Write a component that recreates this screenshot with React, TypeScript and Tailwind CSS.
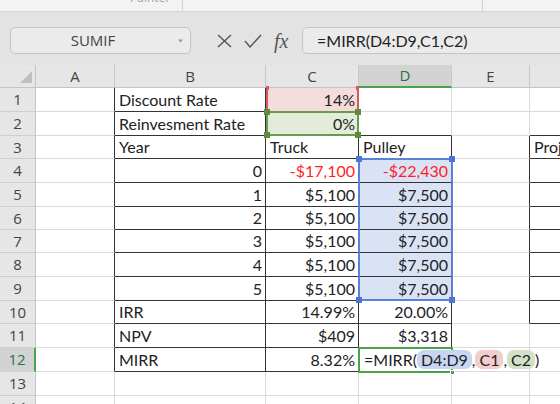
import React from 'react';

const COL_LETTERS = ['A', 'B', 'C', 'D', 'E', 'F'];
const ROW_COUNT = 14;

type Cell = { text: React.ReactNode; right?: boolean; red?: boolean };

const CELLS: Record<string, Cell> = {
  '1,1': { text: 'Discount Rate' },
  '1,2': { text: '14%', right: true },
  '2,1': { text: 'Reinvesment Rate' },
  '2,2': { text: '0%', right: true },
  '3,1': { text: 'Year' },
  '3,2': { text: 'Truck' },
  '3,3': { text: 'Pulley' },
  '3,5': { text: 'Project' },
  '4,1': { text: '0', right: true },
  '4,2': { text: '-$17,100', right: true, red: true },
  '4,3': { text: '-$22,430', right: true, red: true },
  '10,1': { text: 'IRR' },
  '10,2': { text: '14.99%', right: true },
  '10,3': { text: '20.00%', right: true },
  '11,1': { text: 'NPV' },
  '11,2': { text: '$409', right: true },
  '11,3': { text: '$3,318', right: true },
  '12,1': { text: 'MIRR' },
  '12,2': { text: '8.32%', right: true },
};
for (let i = 1; i <= 5; i++) {
  CELLS[`${i + 4},1`] = { text: String(i), right: true };
  CELLS[`${i + 4},2`] = { text: '$5,100', right: true };
  CELLS[`${i + 4},3`] = { text: '$7,500', right: true };
}

// cells that carry a thin black border
function boxed(r: number, c: number) {
  if (c === 1 && r >= 1 && r <= 12) return true;
  if ((c === 2 || c === 3) && r >= 3 && r <= 12) return true;
  if (c === 5 && r >= 3 && r <= 10) return true;
  return false;
}

function Pill({ bg, children }: { bg: string; children: React.ReactNode }) {
  return <span className={`rounded-[7px] px-[4px] ${bg}`}>{children}</span>;
}

function FormulaInCell() {
  return (
    <span className="relative z-10 whitespace-nowrap pl-[1px]">
      =MIRR(
      <Pill bg="bg-[#c9d6f2]">D4:D9</Pill>,<Pill bg="bg-[#f3cccc]">C1</Pill>,
      <Pill bg="bg-[#d3e1c8]">C2</Pill>)
    </span>
  );
}

function GridCell({ r, c }: { r: number; c: number }) {
  const cell = CELLS[`${r},${c}`];
  const darkRight = boxed(r, c) || boxed(r, c + 1);
  const darkBottom = boxed(r, c) || boxed(r + 1, c);
  let fill = '';
  if (c === 2 && r === 1) fill = 'bg-[#f5dcdc]';
  if (c === 2 && r === 2) fill = 'bg-[#e3ecda]';
  if (c === 3 && r >= 4 && r <= 9) fill = 'bg-[#dae3f5]';
  return (
    <div
      className={`flex items-center overflow-visible border-r border-b px-[4px] leading-[20px] ${
        darkRight ? 'border-r-[#333]' : 'border-r-[#dadada]'
      } ${darkBottom ? 'border-b-[#333]' : 'border-b-[#dadada]'} ${fill} ${
        cell?.right ? 'justify-end pr-[3px]' : ''
      } ${cell?.red ? 'text-[#ff1f1f]' : 'text-[#222]'}`}
    >
      {r === 12 && c === 3 ? <FormulaInCell /> : <span className="whitespace-nowrap">{cell?.text}</span>}
    </div>
  );
}

export default function App() {
  const rows = Array.from({ length: ROW_COUNT }, (_, i) => i + 1);
  return (
    <div className="relative h-[404px] w-[560px] overflow-hidden bg-white font-['Open_Sans',sans-serif]">
      {/* ribbon remnant */}
      <div className="flex h-[12px] overflow-hidden border-b border-[#d6d6d6] bg-[#f3f3f3] text-[12px] text-[#a3a3a3]">
        <div className="w-[182px] pl-[130px] leading-none -mt-[8px]">Painter</div>
        <div className="w-[300px] border-l border-[#d2d2d2]" />
        <div className="flex-1 border-l border-[#d2d2d2]" />
      </div>

      {/* formula bar */}
      <div className="flex h-[53px] items-start overflow-hidden bg-[#e3e3e3] pl-[10px] pt-[15px]">
        <div className="flex h-[27px] w-[181px] shrink-0 items-center rounded-[5px] border border-[#c4c4c4] bg-[#ebebeb]">
          <span className="flex-1 pl-[2px] text-center text-[15px] text-[#444]">SUMIF</span>
          <svg width="14" height="6" viewBox="0 0 14 6" className="mr-[3px]">
            <path d="M5 1.5h5l-2.5 3z" fill="#9a9a9a" />
          </svg>
        </div>
        <div className="flex h-[27px] w-[111px] shrink-0 items-center pl-[26px]">
          <svg width="15" height="14" viewBox="0 0 15 14">
            <path d="M1 1l13 12M14 1L1 13" stroke="#555" strokeWidth="1.4" fill="none" />
          </svg>
          <svg width="18" height="14" viewBox="0 0 18 14" className="ml-[12px]">
            <path d="M1 7l5 6L17 1" stroke="#555" strokeWidth="1.4" fill="none" />
          </svg>
          <span className="ml-[12px] font-['Liberation_Serif',serif] text-[20px] italic leading-none text-[#555]">
            fx
          </span>
        </div>
        <div className="flex h-[27px] w-[300px] shrink-0 items-center rounded-l-[5px] border border-[#c4c4c4] bg-[#ebebeb] pl-[14px] font-['Lato',sans-serif] text-[16px] text-[#222]">
          =MIRR(D4:D9,C1,C2)
        </div>
      </div>

      {/* sheet */}
      <div className="relative grid grid-cols-[36px_79px_151px_93px_93px_78px_120px] grid-rows-[23px_24px_24px_23px_24px_24px_23px_23px_24px_24px_23px_24px_24px_24px_24px] font-['Lato',sans-serif] text-[16px]">
        <div className="relative border-r border-b border-[#c4c4c4] bg-[#e6e6e6]">
          <svg width="12" height="12" viewBox="0 0 12 12" className="absolute left-[20px] top-[6px]">
            <path d="M12 0V12H0z" fill="#bfbfbf" />
          </svg>
        </div>
        {COL_LETTERS.map((l) => (
          <div
            key={l}
            className={`flex items-center justify-center border-r border-[#c8c8c8] font-['Open_Sans',sans-serif] text-[15px] ${
              l === 'D'
                ? 'border-b-2 border-b-[#4aa24a] bg-[#d3d3d3] text-[#217346]'
                : 'border-b border-b-[#c4c4c4] bg-[#e6e6e6] text-[#444]'
            }`}
          >
            {l}
          </div>
        ))}
        {rows.map((r) => (
          <React.Fragment key={r}>
            <div
              className={`flex items-center justify-center border-b border-b-[#cfcfcf] font-['Open_Sans',sans-serif] text-[15px] ${
                r === 12
                  ? 'border-r-2 border-r-[#4aa24a] bg-[#d3d3d3] text-[#217346]'
                  : 'border-r border-r-[#c4c4c4] bg-[#e6e6e6] text-[#444]'
              }`}
            >
              {r}
            </div>
            {COL_LETTERS.map((_, c) => (
              <GridCell key={c} r={r} c={c} />
            ))}
          </React.Fragment>
        ))}

        {/* C1 reference (red) */}
        <div className="pointer-events-none absolute left-[266px] top-[23px] h-[24px] w-[93px] border-x-2 border-[#d65a5a]">
          <div className="absolute -left-[2px] -top-[2px] h-[4px] w-[3px] bg-[#d65a5a]" />
          <div className="absolute -right-[2px] -top-[2px] h-[4px] w-[3px] bg-[#d65a5a]" />
        </div>
        {/* C2 reference (green) */}
        <div className="pointer-events-none absolute left-[266px] top-[46px] h-[25px] w-[93px] border-2 border-[#6a9a4b]">
          <div className="absolute -left-[4px] -top-[4px] h-[6px] w-[6px] bg-[#5d8c3f]" />
          <div className="absolute -right-[4px] -top-[4px] h-[6px] w-[6px] bg-[#5d8c3f]" />
          <div className="absolute -left-[4px] -bottom-[4px] h-[6px] w-[6px] bg-[#5d8c3f]" />
          <div className="absolute -right-[4px] -bottom-[4px] h-[6px] w-[6px] bg-[#5d8c3f]" />
        </div>
        {/* D4:D9 reference (blue) */}
        <div className="pointer-events-none absolute left-[358px] top-[93px] h-[143px] w-[95px] border-2 border-[#5a80d8]">
          <div className="absolute -left-[4px] -top-[4px] h-[6px] w-[6px] bg-[#4d74d2]" />
          <div className="absolute -right-[4px] -top-[4px] h-[6px] w-[6px] bg-[#4d74d2]" />
          <div className="absolute -left-[4px] -bottom-[4px] h-[6px] w-[6px] bg-[#4d74d2]" />
          <div className="absolute -right-[4px] -bottom-[4px] h-[6px] w-[6px] bg-[#4d74d2]" />
        </div>
        {/* active cell D12 */}
        <div className="pointer-events-none absolute left-[358px] top-[282px] h-[26px] w-[95px] border-2 border-[#4aa24a]">
          <div className="absolute -right-[4px] -bottom-[4px] h-[5px] w-[5px] border border-white bg-[#4aa24a]" />
        </div>
      </div>
    </div>
  );
}
